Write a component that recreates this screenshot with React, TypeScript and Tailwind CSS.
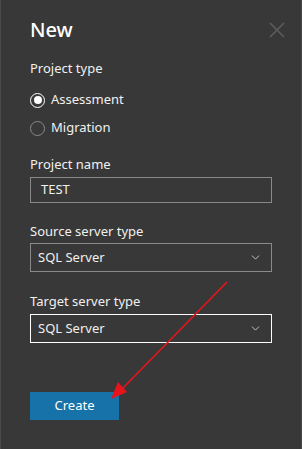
import { ChevronDown } from "lucide-react"

const Label = ({ children }: { children: React.ReactNode }) => (
  <div className="text-[13px] leading-[18px] text-[#f0f0f0]">{children}</div>
)

const Radio = ({ label, checked }: { label: string; checked?: boolean }) => (
  <div className="flex items-center gap-[6px] h-[18px]">
    <span
      className={`flex h-[15px] w-[15px] items-center justify-center rounded-full border ${
        checked ? "border-white" : "border-[#8a8a8a]"
      }`}
    >
      {checked && <span className="h-[8px] w-[8px] rounded-full bg-white" />}
    </span>
    <span className="text-[13px] text-[#f0f0f0]">{label}</span>
  </div>
)

const Select = ({ value, focused }: { value: string; focused?: boolean }) => (
  <div
    className={`flex h-[29px] items-center justify-between border px-[7px] text-[13px] text-[#f0f0f0] ${
      focused ? "border-white" : "border-[#8a8a8a]"
    }`}
  >
    <span>{value}</span>
    <ChevronDown size={13} strokeWidth={1.5} className="mr-[2px] text-[#e0e0e0]" />
  </div>
)

export default function App() {
  return (
    <div
      className="relative h-[449px] w-[302px] overflow-hidden border-x border-[#4a4a4a] bg-[#383838]"
      style={{ fontFamily: '"Noto Sans", "Open Sans", sans-serif' }}
    >
      <div className="px-[29px] pt-[14px]">
        <div className="flex items-center justify-between">
          <h1 className="text-[20px] font-medium leading-[32px] text-white">New</h1>
          <svg width="16" height="16" viewBox="0 0 16 16" className="mr-[-13px]">
            <path d="M1 1 L15 15 M15 1 L1 15" stroke="#5c5c5c" strokeWidth="1.6" />
          </svg>
        </div>

        <div className="mt-[13px]">
          <Label>Project type</Label>
        </div>
        <div className="mt-[14px] flex flex-col gap-[10px]">
          <Radio label="Assessment" checked />
          <Radio label="Migration" />
        </div>

        <div className="mt-[18px]">
          <Label>Project name</Label>
        </div>
        <div className="mt-[4px] flex h-[26px] items-center border border-[#8a8a8a] px-[10px] text-[13px] text-[#f0f0f0]">
          TEST
        </div>

        <div className="mt-[19px]">
          <Label>Source server type</Label>
        </div>
        <div className="mt-[3px]">
          <Select value="SQL Server" />
        </div>

        <div className="mt-[20px]">
          <Label>Target server type</Label>
        </div>
        <div className="mt-[4px]">
          <Select value="SQL Server" focused />
        </div>

        <button className="mt-[49px] h-[28px] w-[89px] bg-[#1672a8] text-[13px] text-white">
          Create
        </button>
      </div>

      <svg
        className="pointer-events-none absolute left-0 top-0"
        width="302"
        height="449"
        viewBox="0 0 302 449"
      >
        <line x1="226" y1="282" x2="120" y2="390" stroke="#e8141c" strokeWidth="1.6" />
        <polygon points="110,399 117,382 126,392" fill="#e8141c" />
      </svg>
    </div>
  )
}
